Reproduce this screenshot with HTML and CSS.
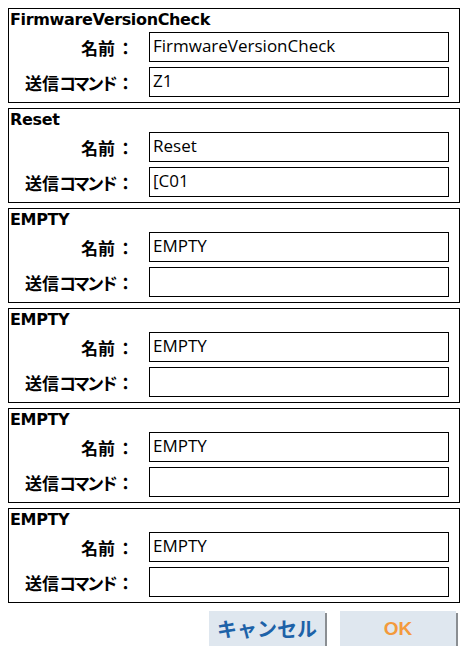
FILE: index.html
```html
<!DOCTYPE html>
<html>
<head>
<meta charset="utf-8">
<link rel="stylesheet" href="styles.css">
</head>
<body>
<div class="page">
  <div class="group">
    <div class="title">FirmwareVersionCheck</div>
    <div class="row"><div class="label">名前<span class="colon">：</span></div><div class="field">FirmwareVersionCheck</div></div>
    <div class="row"><div class="label">送信<span class="kana">コマンド</span><span class="colon">：</span></div><div class="field">Z1</div></div>
  </div>
  <div class="group">
    <div class="title">Reset</div>
    <div class="row"><div class="label">名前<span class="colon">：</span></div><div class="field">Reset</div></div>
    <div class="row"><div class="label">送信<span class="kana">コマンド</span><span class="colon">：</span></div><div class="field">[C01</div></div>
  </div>
  <div class="group">
    <div class="title">EMPTY</div>
    <div class="row"><div class="label">名前<span class="colon">：</span></div><div class="field">EMPTY</div></div>
    <div class="row"><div class="label">送信<span class="kana">コマンド</span><span class="colon">：</span></div><div class="field"></div></div>
  </div>
  <div class="group">
    <div class="title">EMPTY</div>
    <div class="row"><div class="label">名前<span class="colon">：</span></div><div class="field">EMPTY</div></div>
    <div class="row"><div class="label">送信<span class="kana">コマンド</span><span class="colon">：</span></div><div class="field"></div></div>
  </div>
  <div class="group">
    <div class="title">EMPTY</div>
    <div class="row"><div class="label">名前<span class="colon">：</span></div><div class="field">EMPTY</div></div>
    <div class="row"><div class="label">送信<span class="kana">コマンド</span><span class="colon">：</span></div><div class="field"></div></div>
  </div>
  <div class="group">
    <div class="title">EMPTY</div>
    <div class="row"><div class="label">名前<span class="colon">：</span></div><div class="field">EMPTY</div></div>
    <div class="row"><div class="label">送信<span class="kana">コマンド</span><span class="colon">：</span></div><div class="field"></div></div>
  </div>
  <div class="buttons">
    <div class="btn cancel">キャンセル</div>
    <div class="btn ok">OK</div>
  </div>
</div>
</body>
</html>
```
FILE: styles.css
```css
html, body {
  margin: 0;
  padding: 0;
  background: #ffffff;
}
.page {
  padding: 8px 7px 0 8px;
  display: flex;
  flex-direction: column;
  gap: 5px;
  font-family: "DejaVu Sans", "Noto Sans CJK JP", sans-serif;
  color: #000;
}
.group {
  width: 449px;
  height: 93px;
  border: 1px solid #000;
  display: flex;
  flex-direction: column;
  padding: 0 0 0 1px;
  box-sizing: content-box;
}
.title {
  font-weight: bold;
  font-size: 16px;
  line-height: 22px;
  height: 24px;
  letter-spacing: -0.35px;
}
.row {
  display: flex;
  align-items: center;
  height: 30px;
  margin-bottom: 5px;
}
.label {
  width: 124px;
  flex: none;
  text-align: right;
  font-weight: bold;
  font-size: 17px;
  font-family: "Noto Sans CJK JP", sans-serif;
  white-space: nowrap;
}
.kana {
  letter-spacing: -3px;
}
.colon {
  margin-left: 2px;
}
.field {
  margin-left: 15px;
  height: 28px;
  border: 1px solid #000;
  font-family: "Open Sans", "Noto Sans CJK JP", sans-serif;
  font-size: 17px;
  line-height: 26px;
  padding-left: 3px;
  box-sizing: content-box;
  width: 295px;
}
.buttons {
  display: flex;
  justify-content: flex-end;
  gap: 15px;
  margin-top: 3px;
  padding-right: 3px;
}
.btn {
  width: 116px;
  height: 35px;
  background: #dfe7ef;
  box-shadow: 2px 2px 0 #8a8e92;
  display: flex;
  align-items: center;
  justify-content: center;
  font-weight: bold;
  font-size: 20px;
  font-family: "Noto Sans CJK JP", sans-serif;
}
.cancel { color: #1d62a8; }
.ok { color: #f39a3c; font-family: "Liberation Sans", sans-serif; font-size: 19px; }
```
